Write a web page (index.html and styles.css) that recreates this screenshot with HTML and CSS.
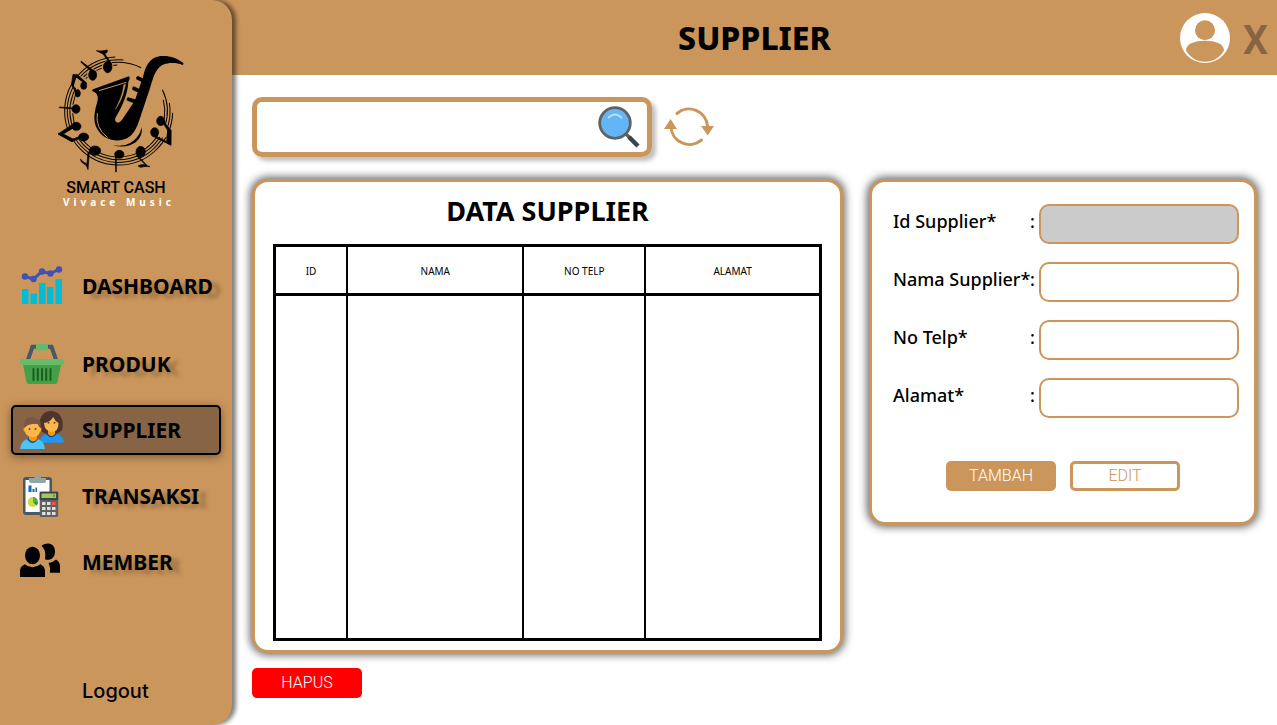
FILE: index.html
```html
<!DOCTYPE html>
<html lang="id">
<head>
<meta charset="utf-8">
<meta name="viewport" content="width=device-width, initial-scale=1">
<title>Supplier - Smart Cash</title>
<link rel="stylesheet" href="styles.css">
</head>
<body>
<div class="app">
  <header class="topbar">
    <h1 class="topbar-title">SUPPLIER</h1>
    <div class="topbar-actions">
      <button class="icon-button" type="button" aria-label="Akun">
        <svg width="50" height="50" viewBox="0 0 50 50"><circle cx="25" cy="25" r="25" fill="#fff"/><circle cx="25" cy="17.300" r="10" fill="#cb965c"/><path d="M6 37.500C6 31 14 27.700 25 27.700S44 31 44 37.500C39.500 45 33 48.700 25 48.700S10.500 45 6 37.500Z" fill="#cb965c"/></svg>
      </button>
      <button class="close-button" type="button">X</button>
    </div>
  </header>

  <aside class="sidebar">
    <div class="brand">
      <svg class="brand-mark" width="130" height="127" viewBox="50 20 390 381" aria-hidden="true">
        <g fill="none" stroke="#000" stroke-width="3">
          <circle cx="235" cy="212" r="162" pathLength="360" stroke-dasharray="264 96" transform="rotate(2 235 212)"/>
          <circle cx="235" cy="212" r="154" pathLength="360" stroke-dasharray="284 76" transform="rotate(-9 235 212)"/>
          <circle cx="235" cy="212" r="146" pathLength="360" stroke-dasharray="323 37" transform="rotate(-26 235 212)"/>
          <circle cx="235" cy="212" r="138" pathLength="360" stroke-dasharray="282 78" transform="rotate(-14 235 212)"/>
        </g>
        <g fill="#cb965c">
          <circle cx="235" cy="212" r="134"/>
          <circle cx="202" cy="80" r="18"/><circle cx="157" cy="103" r="17"/><circle cx="120" cy="128" r="20"/><circle cx="106" cy="206" r="16"/>
          <circle cx="105" cy="276" r="22"/><circle cx="369" cy="272" r="20"/>
        </g>
        <g fill="#000" stroke="#000" stroke-width="2">
          <ellipse cx="202" cy="80" rx="13" ry="17"/><ellipse cx="157" cy="104" rx="12" ry="16"/>
          <ellipse cx="130" cy="136" rx="9" ry="11"/><ellipse cx="112" cy="159" rx="8" ry="11"/>
          <ellipse cx="107" cy="206" rx="12" ry="13"/><ellipse cx="108" cy="258" rx="14" ry="12"/>
          <ellipse cx="130" cy="290" rx="15" ry="12"/><ellipse cx="164" cy="331" rx="17" ry="14"/>
          <ellipse cx="237" cy="342" rx="14" ry="12"/><ellipse cx="301" cy="334" rx="14" ry="16"/>
          <ellipse cx="343" cy="276" rx="12" ry="14"/><ellipse cx="361" cy="242" rx="12" ry="14"/>
          <path d="M211 72 188 41 168 31Q184 34 201 29V33Q201 38 193 40L215 72Z"/>
          <path d="M123 63 166 96 162 102 121 65Z"/>
          <path d="M139 128 109 101 94 135 106 156 109 153 98 135 106 109 136 132Z"/>
          <path d="M98 102 109 104 99 136 93 135Z"/>
          <path d="M57 200 101 203V206L57 202Z"/>
          <path d="M100 250 53 281 95 304 126 291 123 287 97 296 69 281 105 259Z"/>
          <path d="M54 281 67 282 97 296 95 304Z"/>
          <path d="M147 335 143 388Q141 374 130 370 121 365 120 356 132 370 140 370L143 335Z"/>
          <path d="M225 346 226 395H228L228 346Z"/>
          <path d="M291 345 321 376 329 379Q312 377 301 381L293 377Q304 370 316 374L288 346Z"/>
          <path d="M372 246 392 270 391 314 345 292V287L380 304 382 270 370 252Z"/>
          <path d="M392 270V315L379 307 382 268Z"/>
          <path stroke="none" d="M155 149Q156 155 163 155 178 164 169 192C160 221 158 250 175 273 195 302 238 309 267 289 285 276 293 253 302 224L329 144C340 105 348 84 366 74 386 66 407 66 427 74Q430 73 429 68C409 51 386 45 361 47 333 51 320 69 312 94L307 114 293 107Q286 109 288 117L303 124 296 145 280 138Q273 142 277 149L292 156 285 177 263 171Q255 177 261 181L279 188 244 240Q234 253 225 243 222 237 227 229C249 192 262 159 264 124Q271 115 266 108L158 147Z"/>
          <path stroke="none" d="M216 314Q246 321 270 308 298 292 304 261 309 286 286 306 256 326 216 314Z"/>
        </g>
        <g fill="none" stroke="#cb965c"><path d="M176 151 258 126" stroke-width="3"/><path d="M256 131C249 162 242 184 225 207 238 181 247 161 250 134Z" fill="#cb965c"/><path d="M171 218Q164 263 202 292" stroke-width="3"/></g>
      </svg>
      <p class="brand-name">SMART CASH</p>
      <p class="brand-tagline">Vivace Music</p>
    </div>

    <nav class="nav">
      <a class="nav-item nav-item-lead" href="#dashboard">
        <svg class="nav-icon" viewBox="0 0 44 44"><path fill="#00bcd4" d="M2 25h6.500v15H2zM10.500 29.500h6.500V40h-6.500zM19 19h6.500v21H19zM27 23h6.500v17h-6.500zM35.500 15H42v25h-6.500z"/><path d="M5 12.500 13.500 15 22 7.500 30 9.500 39 5.500" fill="none" stroke="#3f51b5" stroke-width="3"/><g fill="#3f51b5"><circle cx="5" cy="12.500" r="3.200"/><circle cx="13.500" cy="15" r="3.200"/><circle cx="22" cy="7.500" r="3.200"/><circle cx="30.500" cy="9.500" r="3.200"/><circle cx="39" cy="5.500" r="3.200"/></g></svg>
        <span>DASHBOARD</span>
      </a>
      <a class="nav-item" href="#produk">
        <svg class="nav-icon" viewBox="0 0 44 44"><path d="M7.500 19 12.500 4.800H31.500L36.500 19" fill="none" stroke="#455a64" stroke-width="4"/><rect x="16" y="2" width="12" height="6.500" rx="1" fill="#66bb6a"/><path d="M2.500 20h39L37.500 40Q37 42 35 42H9Q7 42 6.500 40Z" fill="#43a047"/><rect y="17" width="44" height="6" rx="2" fill="#66bb6a"/><path d="M13.500 27v11M17.800 27v11M22 27v11M26.200 27v11M30.500 27v11" stroke="#1b5e20" stroke-width="2" stroke-linecap="round"/></svg>
        <span>PRODUK</span>
      </a>
      <a class="nav-item nav-item-active" href="#supplier" aria-current="page">
        <svg class="nav-icon" viewBox="0 0 44 44"><path d="M20.500 22C18 15 20 3 31 3 42 3 44 15 42 22Q39 26 31 27 23 26 20.500 22Z" fill="#4e342e"/><path d="M19 35Q20 27 28 25.500H35Q43 27 44 34.500Z" fill="#2196f3"/><path d="M26 25.500Q31 33 37 25.500L34.500 24H28Z" fill="#0d47a1"/><path d="M28 20h7v6q-3.500 4-7 0Z" fill="#ff9800"/><path d="M24 15Q31 14 33 9 35 13 38.500 15 38.500 24 31.500 24 24.500 23 24 15Z" fill="#ffb74d"/><g fill="#784719"><circle cx="28.500" cy="14.800" r="1"/><circle cx="34.500" cy="14.800" r="1"/></g><path d="M0 41Q1 32 9 30.500H16Q24 32 25 41Z" fill="#4fc3f7"/><path d="M7 31Q12.500 39 18 31L16 29.500H9Z" fill="#01579b"/><path d="M9 26h8v5q-4 5-8 0Z" fill="#ff9800"/><ellipse cx="5" cy="21.500" rx="1.500" ry="2.300" fill="#ffa726"/><ellipse cx="20" cy="21.500" rx="1.500" ry="2.300" fill="#ffa726"/><path d="M5 16h15v6q0 7-7.500 7T5 22Z" fill="#ffb74d"/><path d="M4.500 20C3 12 7 9 12 9Q14 9 15 10.500C20 10.500 21.500 14 20.500 20L19 18.500 17 15 8 17 6 18.500Z" fill="#795548"/><g fill="#784719"><circle cx="9.500" cy="21" r="1"/><circle cx="15.500" cy="21" r="1"/></g></svg>
        <span>SUPPLIER</span>
      </a>
      <a class="nav-item" href="#transaksi">
        <svg class="nav-icon" viewBox="0 0 44 44"><rect x="3" y="3" width="29" height="38" rx="3" fill="#455a64"/><path d="M5.500 6h24v32h-24z" fill="#fff"/><path d="M9 4h5.500Q14 .500 17.700 0 21 .500 21 4H26v3q0 2-2 2H11Q9 9 9 7Z" fill="#90a4ae"/><circle cx="17.700" cy="3.500" r="1.500" fill="#cb965c"/><path d="M8.500 11.500h3V18h-3zM12.500 15h2v3h-2zM15.500 13.500H17V18h-1.500z" fill="#1565c0"/><circle cx="12.700" cy="28" r="5" fill="#cddc39"/><path d="M13 23a5 5 0 0 1 5 5h-5Z" fill="#4caf50"/><path d="m13 28 3.500 3.500A5 5 0 0 0 18 28Z" fill="#388e3c"/><rect x="19.700" y="17.700" width="18.500" height="25.300" rx="1.500" fill="#616161"/><path d="M19.700 17.700h18.500V26H19.700z" fill="#424242"/><path d="M21.500 19.500H36V24H21.500z" fill="#9ccc65"/><path d="M34 20.500v2.500" stroke="#33691e"/><path d="M22 28h3.500v3H22zM27 28h3.500v3H27zM22 33h3.500v3H22zM27 33h3.500v3H27zM32 33h3.500v3H32zM22 38h3.500v3H22zM27 38h3.500v3H27zM32 38h3.500v3H32z" fill="#e0e0e0"/><path d="M32 28h3.500v3H32z" fill="#ff5252"/></svg>
        <span>TRANSAKSI</span>
      </a>
      <a class="nav-item" href="#member">
        <svg class="nav-icon" viewBox="0 -2 44 44"><ellipse cx="12.500" cy="13.500" rx="7.500" ry="8.700"/><path d="M0 35V28Q1 24 4.500 22.300 12.500 28 20.500 22.300 24 24 25 28v7Z"/><path d="M21.500 4C25 0 35 0 35 9.500 35 17 29 19 25 17.200 26 11 25 7 21.500 4Z"/><path d="M28.500 21Q33 20.500 36 17.500 39.500 19.500 40 23.500V30.700H30V26Q29.500 23 28.500 21Z"/></svg>
        <span>MEMBER</span>
      </a>
    </nav>
    <a class="logout" href="#logout">Logout</a>
  </aside>

  <main class="content">
    <form class="search" role="search">
      <div class="search-box">
        <input class="search-input" type="search" aria-label="Cari supplier">
        <button class="icon-button" type="submit" aria-label="Cari">
          <svg width="44" height="44" viewBox="0 0 44 44"><path d="M28 28 34 34" stroke="#616161" stroke-width="3.500"/><path d="M32 32 41 41" stroke="#37474f" stroke-width="4.500"/><circle cx="18" cy="18" r="15.300" fill="#64b5f6" stroke="#616161" stroke-width="2.800"/><path d="M11 13Q18 6 25 13" fill="none" stroke="#bbdefb" stroke-width="2"/></svg>
        </button>
      </div>
      <button class="icon-button" type="button" aria-label="Muat ulang">
        <svg width="50" height="40" viewBox="0 0 50 40"><g fill="none" stroke="#cb965c" stroke-width="3" stroke-linecap="round"><path d="M13 6.500A18.500 18.500 0 0 1 43.500 19"/><path d="M37.500 33A18.500 18.500 0 0 1 7 20"/></g><path d="M37 19H50L43.700 28.500ZM0 22H13L6.500 12Z" fill="#cb965c"/></svg>
      </button>
    </form>

    <section class="list">
      <div class="card table-card">
        <h2 class="card-title">DATA SUPPLIER</h2>
        <table class="data-table">
          <colgroup><col class="col-id"><col class="col-name"><col class="col-phone"><col></colgroup>
          <thead><tr><th scope="col">ID</th><th scope="col">NAMA</th><th scope="col">NO TELP</th><th scope="col">ALAMAT</th></tr></thead>
          <tbody><tr><td></td><td></td><td></td><td></td></tr></tbody>
        </table>
      </div>
      <button class="button button-danger" type="button">HAPUS</button>
    </section>

    <form class="card supplier-form">
      <div class="field"><label for="supplier-id">Id Supplier*</label><span>:</span><input id="supplier-id" type="text" disabled></div>
      <div class="field"><label for="supplier-name">Nama Supplier*</label><span>:</span><input id="supplier-name" type="text"></div>
      <div class="field"><label for="supplier-phone">No Telp*</label><span>:</span><input id="supplier-phone" type="text"></div>
      <div class="field"><label for="supplier-address">Alamat*</label><span>:</span><input id="supplier-address" type="text"></div>
      <div class="form-actions">
        <button class="button button-primary" type="submit">TAMBAH</button>
        <button class="button button-outline" type="button">EDIT</button>
      </div>
    </form>
  </main>
</div>
</body>
</html>
```
FILE: styles.css
```css
:root {
  --tan: #cb965c;
  --brown: #876445;
  --sidebar-width: 232px;
}

* { box-sizing: border-box; }

body {
  margin: 0;
  background: #fff;
  color: #000;
  font-family: "Noto Sans", sans-serif;
}

h1, h2, p { margin: 0; }
button, input { font: inherit; }

button {
  padding: 0;
  border: 0;
  background: none;
  cursor: pointer;
}

a {
  color: inherit;
  text-decoration: none;
}

svg { display: block; }

.app {
  display: grid;
  grid-template-columns: var(--sidebar-width) minmax(0, 1fr);
  grid-template-rows: auto 1fr;
  min-height: 100vh;
}

.topbar {
  grid-area: 1 / 1 / 2 / 3;
  display: grid;
  grid-template-columns: 1fr auto 1fr;
  align-items: center;
  min-height: 75px;
  padding-left: var(--sidebar-width);
  background: var(--tan);
}

.topbar-title {
  grid-column: 2;
  font-size: 32px;
  font-weight: 800;
  line-height: 40px;
}

.topbar-actions {
  display: flex;
  justify-content: flex-end;
  align-items: center;
  gap: 13px;
  padding-right: 9px;
}

.close-button {
  padding-top: 6px;
  color: var(--brown);
  font-family: Roboto, sans-serif;
  font-size: 40px;
  font-weight: 600;
  line-height: 50px;
}

.sidebar {
  grid-area: 1 / 1 / 3 / 2;
  z-index: 1;
  display: flex;
  flex-direction: column;
  padding: 47px 11px 20px;
  border-radius: 0 20px 20px 0;
  background: var(--tan);
  box-shadow: 4px 0 4px rgba(0, 0, 0, 0.5);
}

.brand {
  display: flex;
  flex-direction: column;
  align-items: center;
}

.brand-mark { margin-left: 12px; }

.brand-name {
  margin-top: 6px;
  font-family: Roboto, sans-serif;
  font-size: 16px;
  font-weight: 500;
  line-height: 16px;
}

.brand-tagline {
  margin-left: 6px;
  color: #fff;
  font-size: 10px;
  font-weight: 700;
  letter-spacing: 4px;
  line-height: 12px;
}

.nav {
  display: flex;
  flex-direction: column;
  gap: 16px;
  margin-top: 53px;
}

.nav-item {
  display: flex;
  align-items: center;
  gap: 18px;
  height: 50px;
  padding: 0 7px;
  border: 2px solid transparent;
  border-radius: 5px;
  font-size: 21px;
  font-weight: 700;
  text-shadow: 8px 4px 4px rgba(0, 0, 0, 0.25);
}

.nav-item-lead { margin-bottom: 12px; }

.nav-item-active {
  border-color: #000;
  background: var(--brown);
  box-shadow: 0 2px 10px rgba(0, 0, 0, 0.4);
  text-shadow: none;
}

.nav-icon {
  flex: none;
  width: 44px;
  height: 44px;
}

.logout {
  align-self: flex-start;
  margin-top: auto;
  margin-left: 71px;
  font-family: Inter, sans-serif;
  font-size: 20px;
  font-weight: 500;
  line-height: 28px;
}

.content {
  grid-area: 2 / 2 / 3 / 3;
  display: grid;
  grid-template-columns: minmax(0, 591fr) minmax(0, 388fr);
  align-content: start;
  align-items: start;
  gap: 22px 26px;
  padding: 22px 20px;
}

.search {
  grid-column: 1 / -1;
  display: flex;
  align-items: center;
  gap: 12px;
}

.search-box {
  display: flex;
  align-items: center;
  flex: 0 1 400px;
  height: 60px;
  padding-right: 6px;
  border: 5px solid var(--tan);
  border-radius: 10px;
  box-shadow: 4px 4px 4px rgba(0, 0, 0, 0.25);
}

.search-input {
  flex: 1;
  min-width: 0;
  height: 100%;
  padding: 0 12px;
  border: 0;
  outline: 0;
  background: none;
  font-size: 18px;
}

.card {
  border: 3px solid var(--tan);
  border-radius: 16px;
  background: #fff;
  box-shadow: 0 0 8px 2px rgba(0, 0, 0, 0.6);
}

.table-card { padding: 13px 18px 9px; }

.card-title {
  font-size: 27px;
  font-weight: 700;
  line-height: 32px;
  text-align: center;
}

.data-table {
  width: 100%;
  margin-top: 17px;
  border: 3px solid #000;
  border-collapse: collapse;
  table-layout: fixed;
}

.col-id { width: 13.3%; }
.col-name { width: 32.3%; }
.col-phone { width: 22.3%; }

.data-table th {
  height: 49px;
  padding: 2px 0 0;
  border: solid #000;
  border-width: 3px 2px;
  font-size: 10px;
  font-weight: 400;
}

.data-table td {
  height: 345px;
  border: 2px solid #000;
}

.button {
  width: 110px;
  height: 30px;
  border-radius: 5px;
  font-family: Roboto, sans-serif;
  font-size: 16px;
  font-weight: 300;
  line-height: 24px;
}

.button-danger {
  margin-top: 15px;
  background: #f00;
  color: #fff;
}

.button-primary {
  background: var(--tan);
  color: #fff;
}

.button-outline {
  border: 3px solid var(--tan);
  color: var(--tan);
}

.supplier-form {
  display: flex;
  flex-direction: column;
  gap: 18px;
  padding: 22px 15px 31px 21px;
}

.field {
  display: grid;
  grid-template-columns: minmax(0, 1fr) auto 200px;
  column-gap: 4px;
  font-size: 18px;
  font-weight: 500;
  line-height: 34px;
}

.field label { white-space: nowrap; }

.field input {
  width: 100%;
  height: 40px;
  padding: 0 10px;
  border: 2px solid var(--tan);
  border-radius: 10px;
  background: #fff;
}

.field input:disabled { background: #cbcbcb; }

.form-actions {
  display: flex;
  justify-content: center;
  gap: 14px;
  margin: 25px 6px 0 0;
}
```
